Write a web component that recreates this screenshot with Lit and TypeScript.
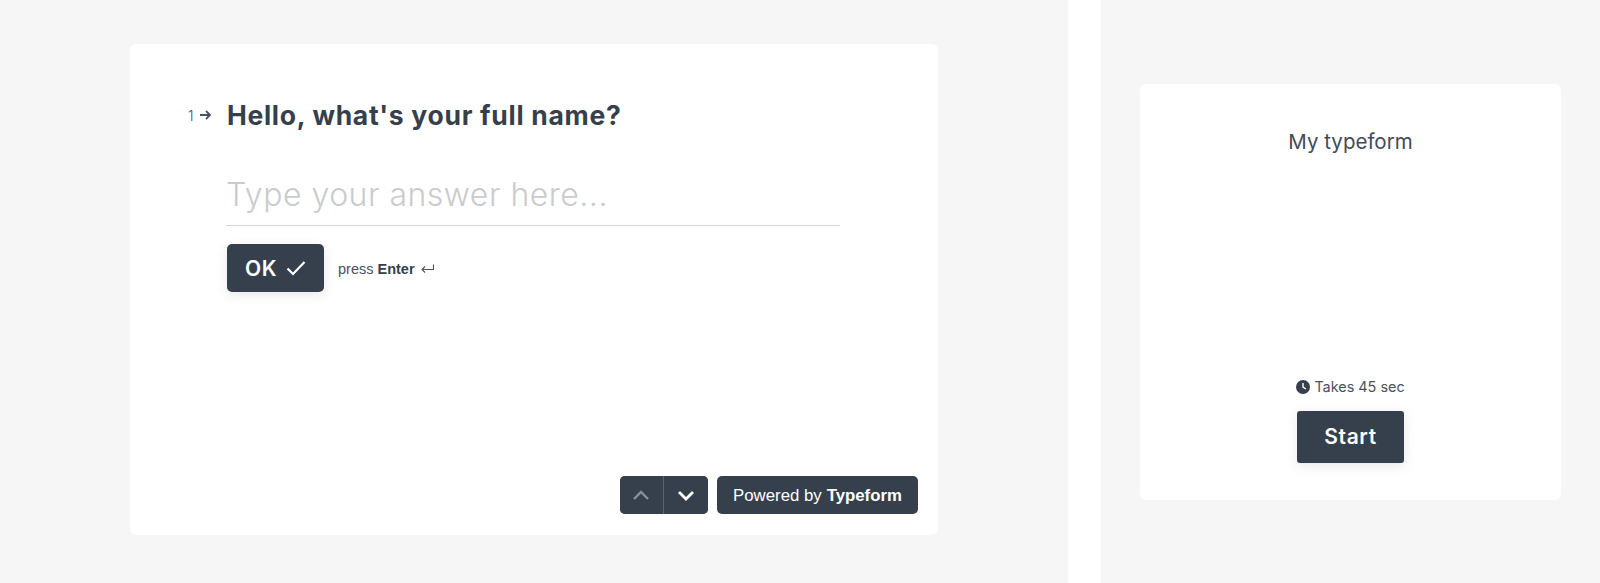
import { css, html, LitElement } from "lit";
import { customElement } from "lit/decorators.js";

@customElement("app-root")
export class AppRoot extends LitElement {
  static styles = css`
    :host {
      display: block;
      font-family: Inter, "Liberation Sans", sans-serif;
      color: #363f4c;
    }
    .page {
      display: grid;
      grid-template-columns: 1068px 499px;
      justify-content: space-between;
      height: 583px;
      background: #fff;
    }
    .panel {
      background: #f6f6f6;
      display: flex;
      align-items: flex-start;
    }
    .panel-left {
      padding: 44px 0 48px 130px;
    }
    .panel-right {
      padding: 84px 0 0 39px;
    }
    .card {
      background: #fff;
      border-radius: 6px;
      box-sizing: border-box;
      display: flex;
      flex-direction: column;
    }
    .card-form {
      width: 808px;
      height: 491px;
      padding: 53px 20px 21px 58px;
    }
    .card-welcome {
      width: 421px;
      height: 416px;
      align-items: center;
      padding: 44px 0 37px;
    }
    .question {
      display: flex;
      align-items: center;
    }
    .num {
      width: 39px;
      display: flex;
      align-items: center;
      gap: 5px;
      font-size: 14px;
      font-weight: 300;
      color: #4a525e;
    }
    h1 {
      margin: 0;
      font-size: 26.5px;
      line-height: 36px;
      font-weight: 700;
      letter-spacing: 0.7px;
    }
    .answer {
      margin: 40px 78px 0 38px;
      padding-bottom: 8px;
      border-bottom: 1px solid #d2d4d6;
      font-size: 32px;
      line-height: 44px;
      font-weight: 300;
      letter-spacing: 0.5px;
      color: #c9cbcd;
    }
    .actions {
      margin: 18px 0 0 39px;
      display: flex;
      align-items: center;
      gap: 14px;
    }
    button {
      border: 0;
      font-family: inherit;
      color: #fff;
      background: #363f4c;
      display: flex;
      align-items: center;
      justify-content: center;
      padding: 0;
    }
    .ok {
      width: 97px;
      height: 48px;
      border-radius: 5px;
      gap: 9px;
      font-size: 21px;
      font-weight: 600;
      letter-spacing: 0.6px;
      box-shadow: 0 3px 12px rgba(54, 63, 76, 0.12);
    }
    .hint {
      display: flex;
      align-items: center;
      gap: 6px;
      padding-top: 2px;
      font-family: "Liberation Sans", sans-serif;
      font-size: 14.5px;
      color: #4a525e;
    }
    .hint b {
      color: #363f4c;
    }
    .footer {
      margin-top: auto;
      display: flex;
      justify-content: flex-end;
      gap: 9px;
    }
    .nav {
      display: flex;
      width: 88px;
      height: 38px;
      border-radius: 5px;
      overflow: hidden;
      background: #363f4c;
    }
    .nav button {
      flex: 1;
    }
    .nav button:first-child {
      flex: 0 0 43px;
      padding-right: 2px;
      box-sizing: border-box;
    }
    .nav button + button {
      border-left: 1px solid #5b636f;
    }
    .powered {
      box-sizing: border-box;
      width: 201px;
      height: 38px;
      padding-top: 1px;
      border-radius: 5px;
      background: #363f4c;
      color: #fff;
      font-family: "Liberation Sans", sans-serif;
      font-size: 16.8px;
      display: flex;
      align-items: center;
      justify-content: center;
      gap: 5px;
    }
    .title {
      font-size: 20.5px;
      line-height: 28px;
      color: #434b57;
    }
    .time {
      margin-top: auto;
      display: flex;
      align-items: center;
      gap: 4px;
      font-size: 14.4px;
      line-height: 20px;
      color: #4a525e;
    }
    .start {
      margin-top: 14px;
      box-sizing: border-box;
      width: 107px;
      height: 52px;
      padding-bottom: 2px;
      border-radius: 3px;
      font-size: 21px;
      font-weight: 600;
      letter-spacing: 0.6px;
      box-shadow: 0 3px 12px rgba(54, 63, 76, 0.12);
    }
  `;

  render() {
    return html`
      <div class="page">
        <section class="panel panel-left">
          <div class="card card-form">
            <div class="question">
              <span class="num"
                >1<svg width="13" height="12" viewBox="0 0 13 12" fill="none" stroke="#4a525e" stroke-width="1.8">
                  <path d="M1 6h10M7 2l4 4-4 4" /></svg
              ></span>
              <h1>Hello, what's your full name?</h1>
            </div>
            <div class="answer">Type your answer here...</div>
            <div class="actions">
              <button class="ok">
                OK
                <svg width="20" height="16" viewBox="0 0 20 16" fill="none" stroke="#fff" stroke-width="2.2">
                  <path d="M1.5 8.5l5.5 5.5L18.5 2" />
                </svg>
              </button>
              <span class="hint">
                <span>press <b>Enter</b></span>
                <svg width="13" height="10" viewBox="0 0 13 10" fill="none" stroke="#4a525e" stroke-width="1.1">
                  <path d="M12.5 0.5v5H1M4 2.5L1 5.5l3 3" />
                </svg>
              </span>
            </div>
            <div class="footer">
              <div class="nav">
                <button aria-label="Previous">
                  <svg width="18" height="11" viewBox="0 0 18 11" fill="none" stroke="#8a9099" stroke-width="2.4">
                    <path d="M2 9l7-7 7 7" />
                  </svg>
                </button>
                <button aria-label="Next">
                  <svg width="18" height="11" viewBox="0 0 18 11" fill="none" stroke="#fff" stroke-width="2.8">
                    <path d="M2 2l7 7 7-7" />
                  </svg>
                </button>
              </div>
              <div class="powered"><span>Powered by</span><b>Typeform</b></div>
            </div>
          </div>
        </section>
        <section class="panel panel-right">
          <div class="card card-welcome">
            <div class="title">My typeform</div>
            <div class="time">
              <svg width="14" height="14" viewBox="0 0 14 14">
                <circle cx="7" cy="7" r="7" fill="#363f4c" />
                <path d="M7 3v4.2l3 1.8" fill="none" stroke="#fff" stroke-width="1.4" />
              </svg>
              Takes 45 sec
            </div>
            <button class="start">Start</button>
          </div>
        </section>
      </div>
    `;
  }
}
